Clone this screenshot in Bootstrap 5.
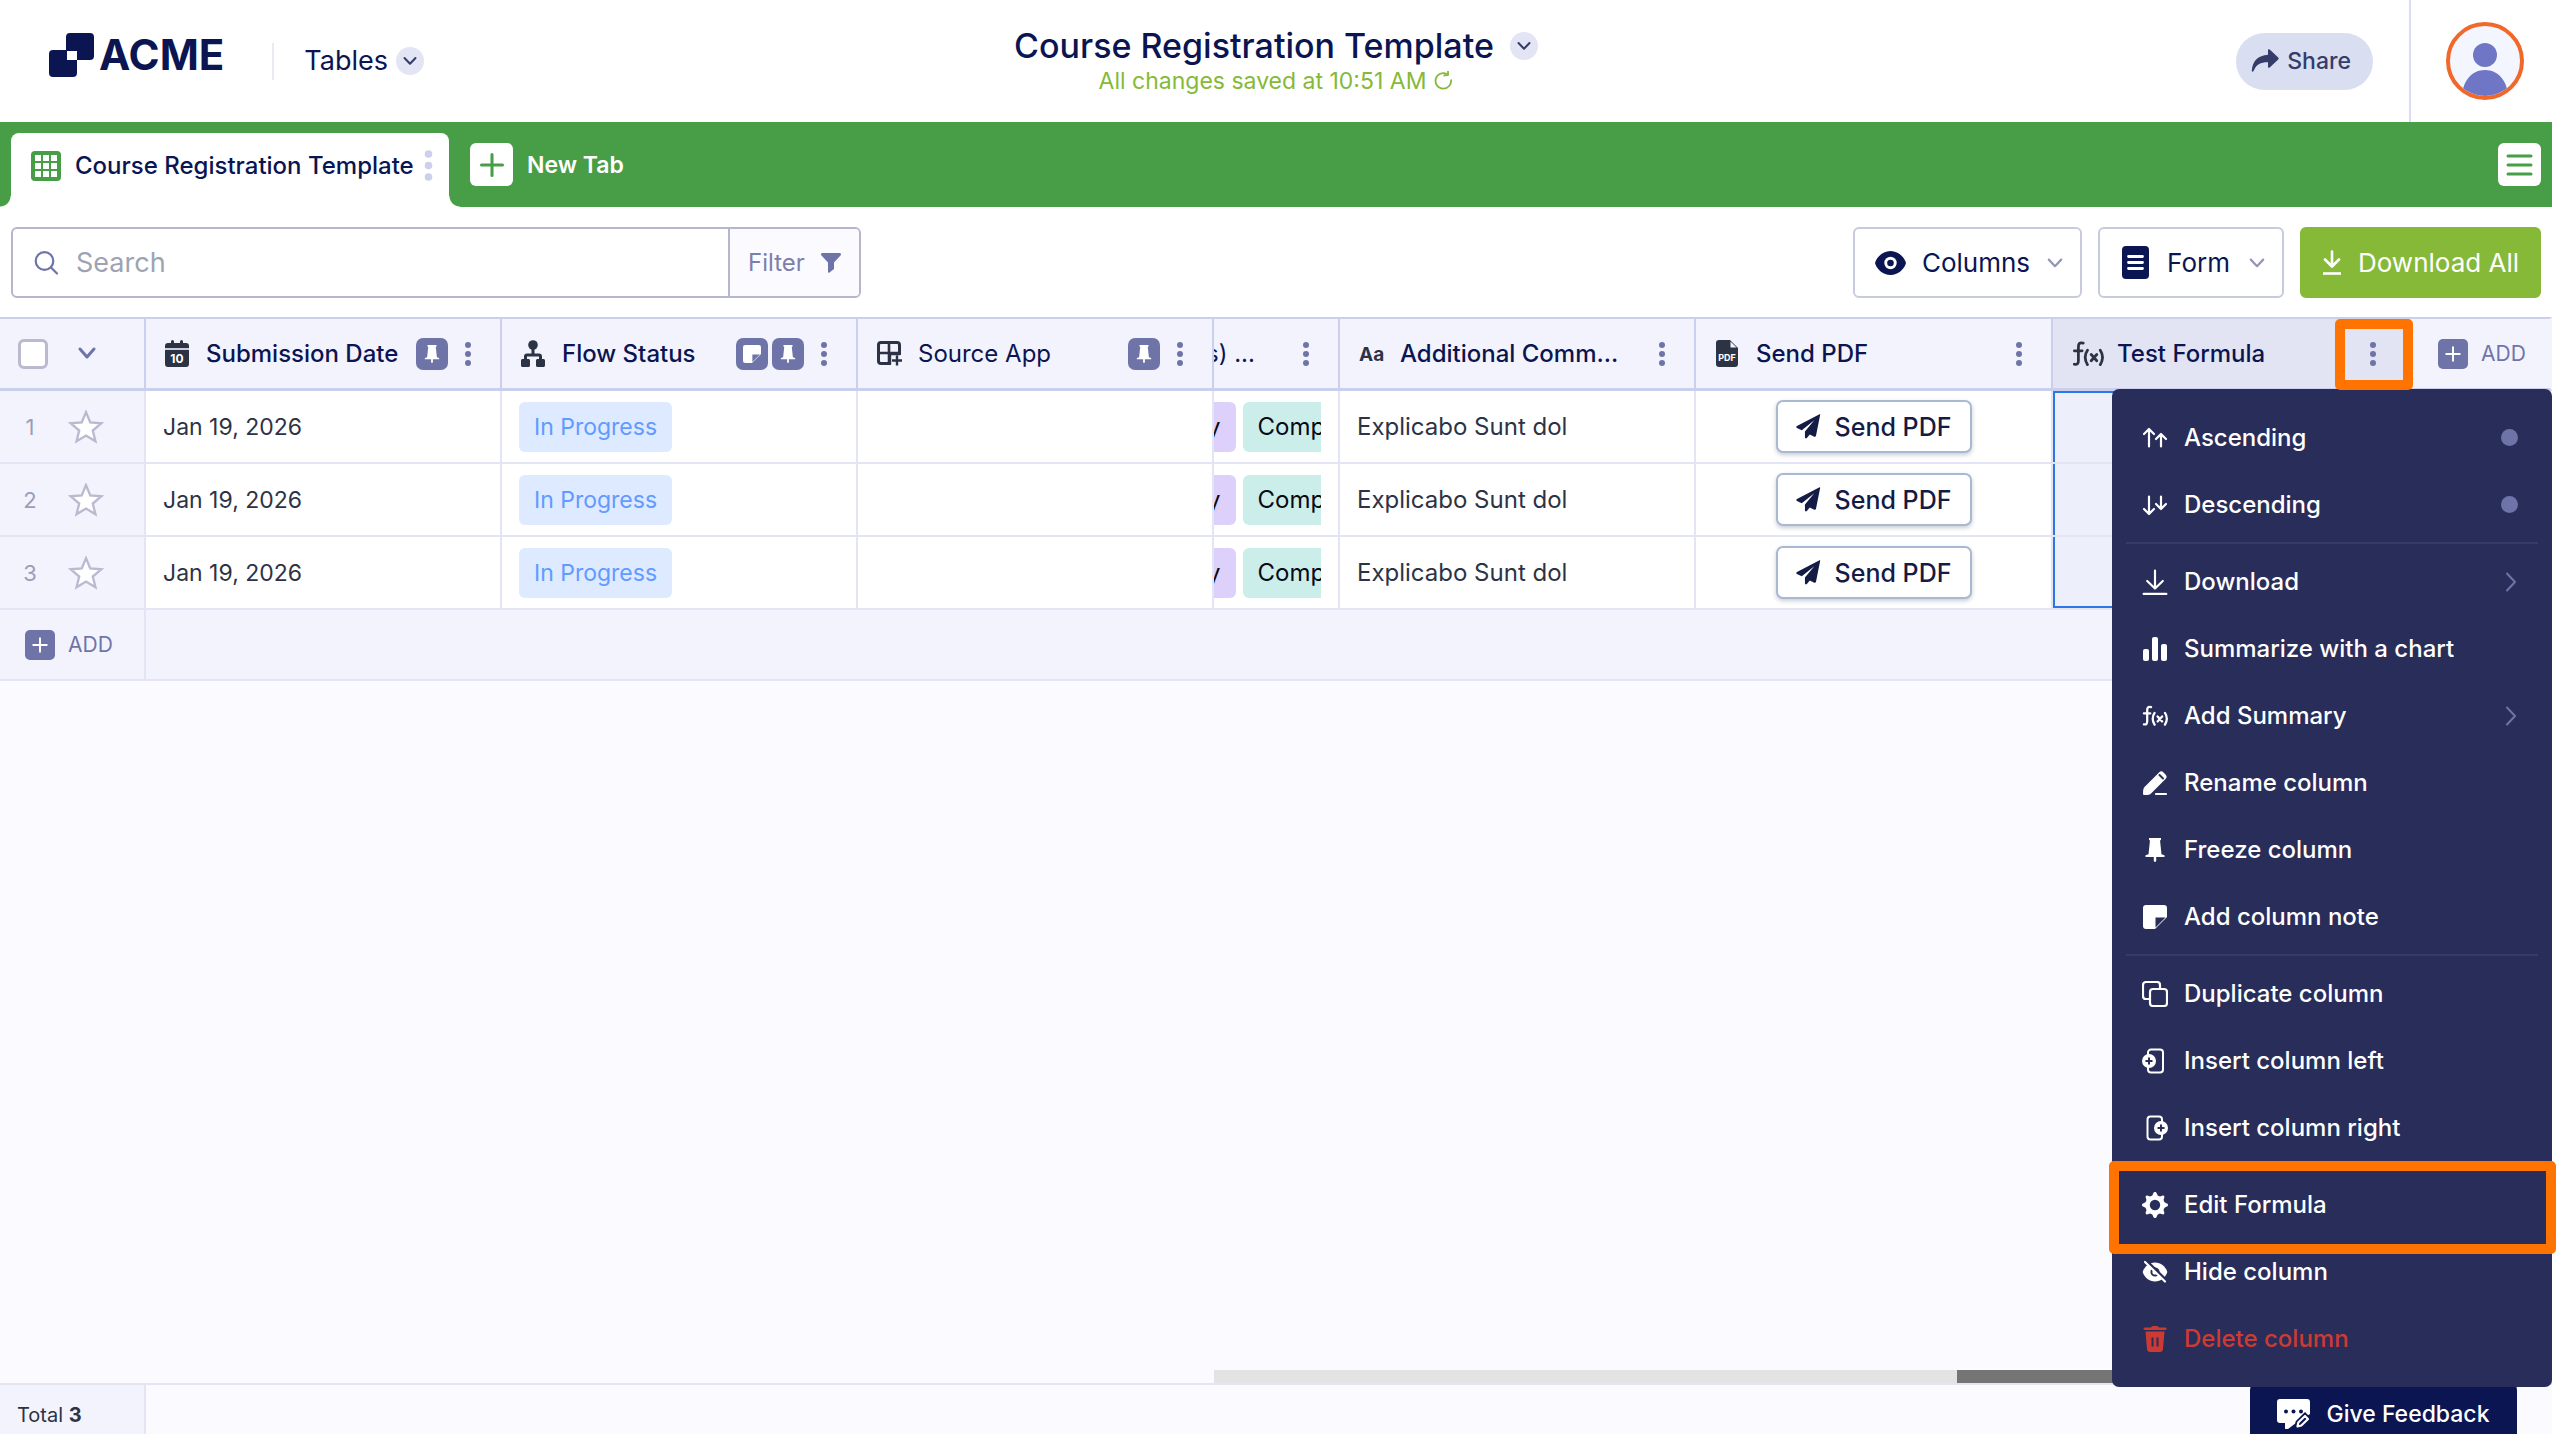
<!DOCTYPE html>
<html lang="en">
<head>
<meta charset="utf-8">
<meta name="viewport" content="width=device-width, initial-scale=1">
<title>Course Registration Template</title>
<link href="https://cdn.jsdelivr.net/npm/bootstrap@5.3.0/dist/css/bootstrap.min.css" rel="stylesheet">
<style>
:root{--navy:#0a1551;--ink:#2c3345;--violet:#6f74a8;--line:#e3e4f4;--headline:#cbcfee;--pale:#f3f3fe;--grass:#489e46;--lime:#86b937;--mark:#ff7300;--menu:#292d59}
body{font-family:Inter,"Noto Sans",sans-serif;font-size:23px;line-height:28px;color:var(--navy);background:#fff}
svg{display:block;flex:none}
button{font:inherit;color:inherit}
.bare{background:none;border:0;padding:0}
.shell{background:#fff;margin-right:8px}
/* header */
.topbar{display:grid;grid-template-columns:1fr auto 1fr;height:122px}
.lockup{margin-left:49px;padding-bottom:12px;gap:5px}
.brandname{font-weight:700;font-size:42px;line-height:44px}
.brandrule{width:2px;height:37px;background:#e9e9f8}
.product{font-size:27px;line-height:32px;padding-left:6px}
.roundchev{width:28px;height:28px;border-radius:50%;background:#e3e5f5;color:#343c6a}
.doctitle{font-size:34px;line-height:36px;font-weight:500}
.saved{color:var(--lime);font-size:23px;line-height:28px;margin-top:3px}
.sharebtn{height:57px;border-radius:29px;background:#dadef1;color:#343c6a;font-weight:500;padding:0 22px 0 15px;margin-right:28px}
.profile{width:143px;border-left:2px solid #dadcf2;padding-left:6px}
.avatar{width:78px;height:78px;border-radius:50%;border:4px solid #f0692b;background:#f3f6ff;overflow:hidden;color:#6f76c5}
/* tabs */
.tabstrip{height:85px;background:var(--grass);padding-left:11px;padding-right:11px;font-size:24px}
.sheet{position:relative;height:74px;width:438px;background:#fff;border-radius:8px 8px 0 0;padding:0 16px 9px 20px;font-weight:500}
.sheetname{margin-left:14px}
.sheet::before,.sheet::after{content:"";position:absolute;bottom:0;width:11px;height:11px}
.sheet::before{right:100%;background:radial-gradient(circle at 0 0,transparent 10px,#fff 11px)}
.sheet::after{left:100%;background:radial-gradient(circle at 100% 0,transparent 10px,#fff 11px)}
.tabactions{padding-left:21px}
.newtab{gap:14px;font-size:23px;font-weight:600}
.squarebtn{width:43px;height:43px;border-radius:6px;background:#fff;color:var(--grass)}
/* toolbar */
.tools{padding:20px 11px;height:110px}
.finder{width:850px;height:71px;border:2px solid #b5b5ce;border-radius:6px;overflow:hidden}
.finder label{padding-left:21px}
.finder input{border:0;outline:0;font-size:27px;color:var(--navy);background:none;min-width:0}
.finder input::placeholder{color:#9da3b2;opacity:1}
.filterbtn{width:131px;border-left:2px solid #b5b5ce;background:#fafaff;color:#7c7fab;font-size:24px}
.toolbtn{height:71px;border:2px solid #c8cbdd;border-radius:6px;background:#fff;font-size:26px;padding:0 16px 0 20px;gap:16px}
.toolbtn.wide{padding-left:22px;gap:18px}
.toolbtn.green{background:var(--lime);border-color:var(--lime);color:#fff;padding:0 20px}
/* grid */
.gridarea{position:relative;background:#fbfaff}
.records{table-layout:fixed;border-collapse:separate;border-spacing:0;width:100%}
.records th,.records td{padding:0;vertical-align:middle;overflow:hidden;white-space:nowrap}
.records th{height:74px;background:var(--pale);border-top:2px solid var(--headline);border-bottom:3px solid var(--headline);border-right:2px solid var(--headline);font-size:24px;font-weight:500}
.records th.hot{background:#e2e4f3;overflow:visible}
.records td{height:73px;background:#fff;border-right:2px solid var(--line);border-bottom:2px solid var(--line);color:var(--ink)}
.records td.lead-cell,.records .addrow td{background:var(--pale)}
.records .addrow td{height:71px}
.records th:last-child,.records td:last-child{border-right-color:transparent}
.records td.picked{background:#edf0fa;box-shadow:inset 2px 0 #2e75e6}
.records tr.first td.picked{box-shadow:inset 2px 2px #2e75e6}
.records tr.final td.picked{box-shadow:inset 2px -2px #2e75e6}
.cellhead{padding-left:19px;padding-right:28px}
.celltext{padding-left:17px}
.celltext.prose{font-size:24px}
.kindicon{width:24px;margin-right:17px;color:var(--ink)}
.chip{width:32px;height:32px;border-radius:7px;background:var(--violet);color:#fff}
.dots{color:var(--violet)}
.pickall{appearance:none;width:30px;height:30px;border:3px solid #bab9d0;border-radius:6px;background:#fff;margin:0 0 0 18px}
.rownum{width:60px;text-align:center;color:#9b9db9;font-size:22px}
.tagbox{display:inline-block;height:50px;line-height:50px;border-radius:6px;padding:0 15px}
.tagbox.blue{background:#deeaff;color:#629aff}
.tagbox.lilac{background:#ddd1fc;color:#0a0a14;margin-left:-22px}
.tagbox.mint{background:#cceeea;color:#0a0a14}
.clipped{overflow:hidden;margin-right:17px;gap:7px;font-size:24px}
.peek{margin-left:-8px;font-weight:400}
.sendbtn{height:53px;width:196px;border:2px solid #aab8d2;border-radius:7px;background:#fff;color:#141c45;font-size:25px;font-weight:500;box-shadow:0 2px 4px rgba(40,50,90,.25);gap:14px}
.adder{color:var(--violet);font-size:21px;font-weight:400;gap:13px;margin-left:25px}
.records th .adder{margin-left:31px}
.addmark{width:30px;height:30px;border-radius:5px;background:var(--violet);color:#fff}
.ring{position:absolute;border:10px solid var(--mark);border-radius:5px;pointer-events:none;z-index:30}
.dotring{inset:-22px -36px -23px -34px}
.itemring{inset:-10px -4px -16px -3px}
.track{height:13px;background:#e3e3e3;margin-left:1214px}
.thumb{height:13px;width:320px;background:#757575;margin-left:743px}
.totals{height:51px;border-top:2px solid var(--line);background:#fbfaff;font-size:20px;color:var(--ink)}
.totalcell{width:146px;background:var(--pale);border-right:2px solid var(--line);padding:10px 0 0 17px}
/* column menu */
.colmenu{position:absolute;top:72px;right:0;width:440px;z-index:20;background:var(--menu);color:#fff;border-radius:7px;padding:15px 0;margin:0;list-style:none;font-size:24px;font-weight:500}
.colmenu li{position:relative}
.colmenu .entry{height:67px;width:100%;padding:0 34px 0 30px;gap:16px;text-align:left}
.colmenu hr{height:2px;margin:4px 14px;border:0;background:#363a65;opacity:1}
.more{color:var(--violet)}
.bullet{width:17px;height:17px;border-radius:50%;background:var(--violet)}
.danger{color:#cc3b33}
.feedback{position:fixed;right:43px;bottom:0;width:267px;height:52px;z-index:10;background:#0a1551;color:#fff;border-radius:8px 8px 0 0;font-weight:500;padding:11px 0 0;gap:15px}
</style>
<script src="https://cdn.jsdelivr.net/npm/bootstrap@5.3.0/dist/js/bootstrap.bundle.min.js" defer></script>
</head>
<body>
<svg width="0" height="0" class="position-absolute" aria-hidden="true">
<defs>
<symbol id="chev" viewBox="0 0 16 16"><path d="M2.500 5 8 10.800 13.500 5" fill="none" stroke="currentColor" stroke-width="2" stroke-linecap="round" stroke-linejoin="round"/></symbol>
<symbol id="next" viewBox="0 0 12 22"><path d="M2 2.500 10 11l-8 8.500" fill="none" stroke="currentColor" stroke-width="2" stroke-linecap="round" stroke-linejoin="round"/></symbol>
<symbol id="dots" viewBox="0 0 8 26"><circle cx="4" cy="4" r="3"/><circle cx="4" cy="13" r="3"/><circle cx="4" cy="22" r="3"/></symbol>
<symbol id="pin" viewBox="0 0 24 24"><path d="M6 0h12v2.200h-1l1.500 14 3 1v1.800h-8.300v4.200L12 24l-1.200-.8V19H2.500v-1.800l3-1L7 2.200H6z"/></symbol>
<symbol id="note" viewBox="0 0 24 24"><path d="M3 0h18a3 3 0 0 1 3 3v9L12 24H3a3 3 0 0 1-3-3V3a3 3 0 0 1 3-3z"/><path d="M12.500 12.500h10L12.500 22.500z" fill="#292d59"/></symbol>
<symbol id="note2" viewBox="0 0 24 24"><path d="M3 0h18a3 3 0 0 1 3 3v9L12 24H3a3 3 0 0 1-3-3V3a3 3 0 0 1 3-3z"/><path d="M12.500 12.500h10L12.500 22.500z" fill="#6f74a8"/></symbol>
<symbol id="plus" viewBox="0 0 24 24"><path d="M12 3v18M3 12h18" stroke="currentColor" stroke-width="2.600" stroke-linecap="round"/></symbol>
<symbol id="star" viewBox="0 0 32 32"><path d="M16 2l4 9.700 10.300.8-7.900 6.800 2.500 10.200L16 24l-8.900 5.500 2.500-10.200L1.700 12.500 12 11.700z" fill="#fff" stroke="#bab9d0" stroke-width="2.200" stroke-linejoin="miter"/></symbol>
<symbol id="plane" viewBox="0 0 26 26"><path d="M25 1.500c.5-.9-.2-1.400-1-1L1 12.500c-1 .6-.9 1.500 0 2l5 2.300L19 6.500 9.300 18.300v6c0 1.200 1.300 1.600 2 .7l3-3.700 4.700 2.300c.8.300 1.600-.1 1.800-1z"/></symbol>
<symbol id="down" viewBox="0 0 24 24"><path d="M12 1.500v16M4.800 11 12 18l7.200-7M1.500 23h21" fill="none" stroke="currentColor" stroke-width="2" stroke-linecap="round" stroke-linejoin="round"/></symbol>
<symbol id="fx" viewBox="0 0 30 24"><g fill="none" stroke="currentColor" stroke-width="2.600" stroke-linecap="round"><path d="M10.500 1.800c-3.300-1-4.500.4-4.500 3.700v12.500c0 3-1 4.200-3.800 3.600M2.200 9h7.300"/><path d="M14.500 8.500c-2.700 4-2.700 9 0 13.500M26.500 8.500c2.700 4 2.700 9 0 13.500M18 12.500l5.200 5.800M23.200 12.500 18 18.300"/></g></symbol>
</defs>
</svg>

<div class="shell d-flex flex-column min-vh-100">
<header class="topbar">
  <div class="d-flex align-items-center">
    <a href="#" class="lockup d-flex align-items-center text-decoration-none text-reset" aria-label="ACME">
      <svg width="45" height="44" viewBox="0 0 45 44"><path fill="#0a1551" fill-rule="evenodd" d="M21 0h20a4 4 0 0 1 4 4v19a4 4 0 0 1-4 4H28v13a4 4 0 0 1-4 4H4a4 4 0 0 1-4-4V21a4 4 0 0 1 4-4h13V4a4 4 0 0 1 4-4zM18 18h10v9H18z"/></svg>
      <span class="brandname">ACME</span>
    </a>
    <div class="brandrule ms-5"></div>
    <button class="bare product d-flex align-items-center gap-2 ms-4">Tables<span class="roundchev d-flex align-items-center justify-content-center"><svg width="16" height="16"><use href="#chev"/></svg></span></button>
  </div>
  <div class="d-flex flex-column align-items-center pt-4">
    <button class="bare d-flex align-items-center gap-3 mt-1"><span class="doctitle">Course Registration Template</span><span class="roundchev d-flex align-items-center justify-content-center"><svg width="16" height="16"><use href="#chev"/></svg></span></button>
    <div class="saved d-flex align-items-center gap-2">All changes saved at 10:51 AM
      <svg width="19" height="20" viewBox="0 0 19 20" fill="none" stroke="currentColor" stroke-width="1.800"><path d="M13 3A7.800 7.800 0 1 0 17 8.500"/><path d="M9.500 4.500 14 4V0"/></svg></div>
  </div>
  <div class="d-flex align-items-center justify-content-end">
    <button class="bare sharebtn d-flex align-items-center gap-2"><svg width="28" height="24" viewBox="0 0 28 24" fill="currentColor"><path d="M17 1.200c0-1 1-1.300 1.700-.6l8.500 8c.6.600.6 1.300 0 1.900l-8.500 8c-.8.700-1.700.3-1.700-.7v-4.500C9 13.300 5.500 15.500 2.500 22c-.6 1.200-1.800.9-1.700-.5C1.500 12 7 6.300 17 5.700z"/></svg>Share</button>
    <div class="profile h-100 d-flex align-items-center justify-content-center ms-2">
      <button class="avatar p-0" aria-label="Profile"><svg width="70" height="70" viewBox="0 0 70 70" fill="currentColor"><circle cx="35" cy="29" r="12"/><path d="M12 72c0-16 9-28 23-28s23 12 23 28z"/></svg></button>
    </div>
  </div>
</header>

<nav class="tabstrip d-flex align-items-end">
  <div class="sheet d-flex align-items-center">
    <svg width="30" height="30" viewBox="0 0 30 30"><rect width="30" height="30" rx="4" fill="#489e46"/><g fill="#fff"><path d="M4 4h6v6H4zM12 4h6v6h-6zM20 4h6v6h-6zM4 12h6v6H4zM12 12h6v6h-6zM20 12h6v6h-6zM4 20h6v6H4zM12 20h6v6h-6zM20 20h6v6h-6z"/></g></svg>
    <span class="sheetname me-auto text-nowrap">Course Registration Template</span>
    <button class="bare" aria-label="Tab options"><svg width="9" height="31" viewBox="0 0 9 31" fill="#cdd0ea"><circle cx="4.500" cy="4" r="3.800"/><circle cx="4.500" cy="15.500" r="3.800"/><circle cx="4.500" cy="27" r="3.800"/></svg></button>
  </div>
  <div class="tabactions d-flex align-items-center flex-fill align-self-center">
    <button class="bare newtab d-flex align-items-center text-white"><span class="squarebtn d-flex align-items-center justify-content-center"><svg width="28" height="28"><use href="#plus"/></svg></span>New Tab</button>
    <button class="bare squarebtn d-flex align-items-center justify-content-center ms-auto" aria-label="All tabs"><svg width="27" height="22" viewBox="0 0 27 22" stroke="currentColor" stroke-width="3" stroke-linecap="round"><path d="M2 2h23M2 11h23M2 20h23"/></svg></button>
  </div>
</nav>

<div class="tools d-flex align-items-start justify-content-between">
  <div class="finder d-flex">
    <label class="d-flex align-items-center flex-fill gap-3">
      <svg width="24" height="25" viewBox="0 0 24 25" fill="none" stroke="#6f74a8" stroke-width="2.200" stroke-linecap="round"><circle cx="10.500" cy="11" r="8.800"/><path d="m17 17.500 6 6"/></svg>
      <input class="flex-fill" type="search" placeholder="Search" aria-label="Search">
    </label>
    <button class="bare filterbtn d-flex align-items-center justify-content-center gap-3">Filter<svg width="20" height="20" viewBox="0 0 20 20" fill="#6f74a8"><path d="M1.500 0h17c1.300 0 1.900 1.200 1.200 2.200L13 9.500V16l-4.500 3.500c-.8.500-1.500.2-1.500-.7V9.500L.3 2.200C-.4 1.200.2 0 1.500 0z"/></svg></button>
  </div>
  <div class="d-flex">
    <button class="toolbtn d-flex align-items-center me-3"><svg width="31" height="24" viewBox="0 0 31 24"><path d="M15.500 0C23 0 28.500 5.500 30.500 10.500c.5 1 .5 2 0 3C28.500 18.500 23 24 15.500 24S2.500 18.500.5 13.500c-.5-1-.5-2 0-3C2.500 5.500 8 0 15.500 0z" fill="#0a1551"/><circle cx="15.500" cy="12" r="6.200" fill="#fff"/><circle cx="15.500" cy="12" r="3.300" fill="#0a1551"/></svg><span>Columns</span><svg width="18" height="18" color="#9597b8"><use href="#chev"/></svg></button>
    <button class="toolbtn wide d-flex align-items-center me-3"><svg width="27" height="33" viewBox="0 0 27 33"><rect width="27" height="33" rx="4" fill="#0a1551"/><path d="M6.500 10.500h14M6.500 16.500h14M6.500 22.500h14" stroke="#fff" stroke-width="2.800" stroke-linecap="round"/></svg><span>Form</span><svg width="18" height="18" color="#9597b8"><use href="#chev"/></svg></button>
    <button class="toolbtn green d-flex align-items-center"><svg width="20" height="25" viewBox="0 0 20 25" fill="none" stroke="#fff" stroke-width="2.600" stroke-linecap="round" stroke-linejoin="round"><path d="M10 1.500V16M3 9.500l7 7 7-7"/><path d="M1 23.500h18" stroke-linecap="butt"/></svg>Download All</button>
  </div>
</div>

<main class="gridarea flex-fill d-flex flex-column">
<table class="records">
<colgroup><col style="width:146px"><col style="width:356px"><col style="width:356px"><col style="width:356px"><col style="width:126px"><col style="width:356px"><col style="width:357px"><col style="width:354px"><col></colgroup>
<thead><tr>
  <th><div class="d-flex align-items-center"><input type="checkbox" class="pickall" aria-label="Select all"><button class="bare ms-4 ps-1" aria-label="Selection options"><svg width="22" height="22" viewBox="0 0 22 22" fill="none" stroke="#6f74a8" stroke-width="3" stroke-linecap="round" stroke-linejoin="round"><path d="m4 6 7 8 7-8"/></svg></button></div></th>
  <th><div class="cellhead d-flex align-items-center"><span class="kindicon"><svg width="24" height="27" viewBox="0 0 24 27"><path fill="#2c3345" d="M3 3h3V1.500a1.500 1.500 0 0 1 3 0V3h6V1.500a1.500 1.500 0 0 1 3 0V3h3a3 3 0 0 1 3 3v18a3 3 0 0 1-3 3H3a3 3 0 0 1-3-3V6a3 3 0 0 1 3-3z"/><path d="M0 9h24" stroke="#f3f3fe" stroke-width="1.600"/><text x="12" y="23" text-anchor="middle" font-size="12" font-weight="700" fill="#fff">10</text></svg></span><span>Submission Date</span>
    <span class="chip ms-auto me-3 d-flex align-items-center justify-content-center"><svg width="18" height="18" fill="currentColor"><use href="#pin"/></svg></span><button class="bare dots" aria-label="Submission Date options"><svg width="8" height="26" fill="currentColor"><use href="#dots"/></svg></button></div></th>
  <th><div class="cellhead d-flex align-items-center"><span class="kindicon"><svg width="24" height="27" viewBox="0 0 24 27" fill="#2c3345"><circle cx="12" cy="5" r="4.800"/><path d="M10.500 8h3v5.500H18a3 3 0 0 1 3 3V19h1.500c.8 0 1.500.7 1.500 1.500v5c0 .8-.7 1.500-1.500 1.500h-6c-.8 0-1.500-.7-1.500-1.500v-5c0-.8.7-1.500 1.500-1.500H18v-2.500H6V19h1.500c.8 0 1.500.7 1.500 1.500v5c0 .8-.7 1.500-1.500 1.500h-6C.7 27 0 26.300 0 25.500v-5C0 19.700.7 19 1.500 19H3v-2.500a3 3 0 0 1 3-3h4.500z"/></svg></span><span>Flow Status</span>
    <span class="chip ms-auto me-1 d-flex align-items-center justify-content-center"><svg width="18" height="18" fill="currentColor"><use href="#note2"/></svg></span><span class="chip me-3 d-flex align-items-center justify-content-center"><svg width="18" height="18" fill="currentColor"><use href="#pin"/></svg></span><button class="bare dots" aria-label="Flow Status options"><svg width="8" height="26" fill="currentColor"><use href="#dots"/></svg></button></div></th>
  <th class="fw-normal"><div class="cellhead d-flex align-items-center"><span class="kindicon"><svg width="25" height="25" viewBox="0 0 25 25"><rect x="1.500" y="1.500" width="21" height="21" rx="2.500" fill="#f3f3fe" stroke="#2c3345" stroke-width="3"/><path d="M12 1v22M1 12h22" stroke="#2c3345" stroke-width="2.600"/><path d="M14 14h11v11H14z" fill="#f3f3fe"/><path d="M20 14.500v10M15 19.500h10M12 13h11M13 12v11" stroke="#2c3345" stroke-width="2.400"/></svg></span><span>Source App</span>
    <span class="chip ms-auto me-3 d-flex align-items-center justify-content-center"><svg width="18" height="18" fill="currentColor"><use href="#pin"/></svg></span><button class="bare dots" aria-label="Source App options"><svg width="8" height="26" fill="currentColor"><use href="#dots"/></svg></button></div></th>
  <th><div class="d-flex align-items-center pe-4"><span class="peek">s) ...</span><button class="bare dots ms-auto me-1" aria-label="Column options"><svg width="8" height="26" fill="currentColor"><use href="#dots"/></svg></button></div></th>
  <th><div class="cellhead d-flex align-items-center"><span class="kindicon"><svg width="26" height="24" viewBox="0 0 26 24"><text x="0" y="19" font-size="19" font-weight="700" fill="#2c3345">Aa</text></svg></span><span>Additional Comm...</span><button class="bare dots ms-auto" aria-label="Additional Comments options"><svg width="8" height="26" fill="currentColor"><use href="#dots"/></svg></button></div></th>
  <th><div class="cellhead d-flex align-items-center"><span class="kindicon"><svg class="mx-auto" width="22" height="27" viewBox="0 0 22 27"><path fill="#2c3345" d="M3 0h11l8 8v16a3 3 0 0 1-3 3H3a3 3 0 0 1-3-3V3a3 3 0 0 1 3-3z"/><path d="M14.500 1.500v6h6z" fill="#f3f3fe"/><text x="11" y="21" text-anchor="middle" font-size="9" font-weight="700" fill="#fff">PDF</text></svg></span><span>Send PDF</span><button class="bare dots ms-auto" aria-label="Send PDF options"><svg width="8" height="26" fill="currentColor"><use href="#dots"/></svg></button></div></th>
  <th class="hot"><div class="cellhead d-flex align-items-center"><span class="kindicon"><svg width="32" height="26"><use href="#fx"/></svg></span><span class="ps-1">Test Formula</span><button class="bare dots ms-auto position-relative" aria-label="Test Formula options"><svg width="8" height="26" fill="currentColor"><use href="#dots"/></svg><span class="ring dotring"></span></button></div></th>
  <th><button class="bare adder d-flex align-items-center"><span class="addmark d-flex align-items-center justify-content-center"><svg width="18" height="18"><use href="#plus"/></svg></span>ADD</button></th>
</tr></thead>
<tbody>
<tr class="first"><td class="lead-cell"><div class="d-flex align-items-center"><span class="rownum">1</span><button class="bare ms-2" aria-label="Star row 1"><svg width="36" height="34"><use href="#star"/></svg></button></div></td><td><div class="celltext">Jan 19, 2026</div></td><td><div class="celltext"><span class="tagbox blue">In Progress</span></div></td><td></td><td><div class="clipped d-flex"><span class="tagbox lilac">y</span><span class="tagbox mint">Comp</span></div></td><td><div class="celltext prose">Explicabo Sunt dol</div></td><td><button class="sendbtn d-flex align-items-center justify-content-center mx-auto p-0"><svg width="25" height="25" fill="currentColor"><use href="#plane"/></svg>Send PDF</button></td><td class="picked"></td><td></td></tr>
<tr><td class="lead-cell"><div class="d-flex align-items-center"><span class="rownum">2</span><button class="bare ms-2" aria-label="Star row 2"><svg width="36" height="34"><use href="#star"/></svg></button></div></td><td><div class="celltext">Jan 19, 2026</div></td><td><div class="celltext"><span class="tagbox blue">In Progress</span></div></td><td></td><td><div class="clipped d-flex"><span class="tagbox lilac">y</span><span class="tagbox mint">Comp</span></div></td><td><div class="celltext prose">Explicabo Sunt dol</div></td><td><button class="sendbtn d-flex align-items-center justify-content-center mx-auto p-0"><svg width="25" height="25" fill="currentColor"><use href="#plane"/></svg>Send PDF</button></td><td class="picked"></td><td></td></tr>
<tr class="final"><td class="lead-cell"><div class="d-flex align-items-center"><span class="rownum">3</span><button class="bare ms-2" aria-label="Star row 3"><svg width="36" height="34"><use href="#star"/></svg></button></div></td><td><div class="celltext">Jan 19, 2026</div></td><td><div class="celltext"><span class="tagbox blue">In Progress</span></div></td><td></td><td><div class="clipped d-flex"><span class="tagbox lilac">y</span><span class="tagbox mint">Comp</span></div></td><td><div class="celltext prose">Explicabo Sunt dol</div></td><td><button class="sendbtn d-flex align-items-center justify-content-center mx-auto p-0"><svg width="25" height="25" fill="currentColor"><use href="#plane"/></svg>Send PDF</button></td><td class="picked"></td><td></td></tr>
<tr class="addrow"><td><button class="bare adder d-flex align-items-center"><span class="addmark d-flex align-items-center justify-content-center"><svg width="18" height="18"><use href="#plus"/></svg></span>ADD</button></td><td colspan="8"></td></tr>
</tbody>
</table>
<div class="track mt-auto"><div class="thumb"></div></div>

<ul class="colmenu">
  <li><button class="bare entry d-flex align-items-center"><svg width="26" height="26" viewBox="0 0 26 26" fill="none" stroke="#fff" stroke-width="2.200" stroke-linecap="round" stroke-linejoin="round"><path d="M7 21.500V4.500M2 9l5-5 5 5M19 21.500V9.500M14 14l5-5 5 5"/></svg>Ascending<span class="bullet ms-auto"></span></button></li>
  <li><button class="bare entry d-flex align-items-center"><svg width="26" height="26" viewBox="0 0 26 26" fill="none" stroke="#fff" stroke-width="2.200" stroke-linecap="round" stroke-linejoin="round"><path d="M7 4.500v17M2 17l5 5 5-5M19 4.500v12M14 12l5 5 5-5"/></svg>Descending<span class="bullet ms-auto"></span></button></li>
  <li><hr></li>
  <li><button class="bare entry d-flex align-items-center"><svg width="26" height="26"><use href="#down"/></svg>Download<svg class="more ms-auto" width="14" height="22"><use href="#next"/></svg></button></li>
  <li><button class="bare entry d-flex align-items-center"><svg width="26" height="26" viewBox="0 0 26 26" fill="#fff"><rect x="1" y="13" width="6" height="12" rx="2"/><rect x="10" y="1" width="6" height="24" rx="2"/><rect x="19" y="8" width="6" height="17" rx="2"/></svg>Summarize with a chart</button></li>
  <li><button class="bare entry d-flex align-items-center"><svg width="26" height="26"><use href="#fx"/></svg>Add Summary<svg class="more ms-auto" width="14" height="22"><use href="#next"/></svg></button></li>
  <li><button class="bare entry d-flex align-items-center"><svg width="26" height="26" viewBox="0 0 26 26" fill="#fff"><path d="M17 2.500c1.600-1.600 3-1.600 4.500 0l2 2c1.500 1.500 1.500 3 0 4.500L9 23.500c-1 1-2.500 1.500-6.500 1.500-1 0-1.500-.5-1.500-1.500C1 19.500 1.500 18 2.500 17z"/><path d="m17.500 5 3.500 3.500" stroke="#292d59" stroke-width="2" stroke-linecap="round"/><path d="M14 24h10" stroke="#fff" stroke-width="2.200" stroke-linecap="round"/></svg>Rename column</button></li>
  <li><button class="bare entry d-flex align-items-center"><svg width="26" height="24" fill="#fff"><use href="#pin"/></svg>Freeze column</button></li>
  <li><button class="bare entry d-flex align-items-center"><svg width="26" height="24" fill="#fff"><use href="#note"/></svg>Add column note</button></li>
  <li><hr></li>
  <li><button class="bare entry d-flex align-items-center"><svg width="26" height="26" viewBox="0 0 26 26" fill="none" stroke="#fff" stroke-width="2.200"><path d="M7.500 18H4a3 3 0 0 1-3-3V4a3 3 0 0 1 3-3h11a3 3 0 0 1 3 3v3.500"/><rect x="8" y="8" width="17" height="17" rx="3"/></svg>Duplicate column</button></li>
  <li><button class="bare entry d-flex align-items-center"><svg width="26" height="26" viewBox="0 0 26 26" fill="none" stroke="#fff" stroke-width="2"><path d="M6 7V4.500a3 3 0 0 1 3-3h9a3 3 0 0 1 3 3v17a3 3 0 0 1-3 3H9a3 3 0 0 1-3-3V19"/><circle cx="7" cy="13" r="7" fill="#fff" stroke="none"/><path d="M7 9.500v7M3.500 13h7" stroke="#292d59"/></svg>Insert column left</button></li>
  <li><button class="bare entry d-flex align-items-center"><svg width="26" height="26" viewBox="0 0 26 26" fill="none" stroke="#fff" stroke-width="2"><path d="M20 7V4.500a3 3 0 0 0-3-3H8.500a3 3 0 0 0-3 3v17a3 3 0 0 0 3 3H17a3 3 0 0 0 3-3V19"/><circle cx="19" cy="13" r="7" fill="#fff" stroke="none"/><path d="M19 9.500v7M15.500 13h7" stroke="#292d59"/></svg>Insert column right</button></li>
  <li><hr></li>
  <li><button class="bare entry d-flex align-items-center"><svg width="26" height="26" viewBox="0 0 26 26"><path fill="#fff" fill-rule="evenodd" d="M13 0c1 0 1.500.5 2 2l.7 1.500 2.300 1 2-.8c2-.5 2.700.3 2.200 2.200l-.7 2 1 2.300L24 11c1.500.5 2 1 2 2s-.5 1.500-2 2l-1.500.8-1 2.300.7 2c.5 1.900-.3 2.700-2.200 2.200l-2-.8-2.300 1L15 24c-.5 1.500-1 2-2 2s-1.500-.5-2-2l-.7-1.500-2.300-1-2 .8c-2 .5-2.700-.3-2.200-2.200l.7-2-1-2.300L2 15c-1.500-.5-2-1-2-2s.5-1.500 2-2l1.500-.8 1-2.300-.7-2C3.300 4 4.100 3.200 6 3.700l2 .8 2.300-1L11 2c.5-1.500 1-2 2-2zm0 7.800a5.200 5.200 0 1 0 0 10.400 5.200 5.200 0 0 0 0-10.400z"/></svg>Edit Formula</button><span class="ring itemring"></span></li>
  <li><button class="bare entry d-flex align-items-center"><svg width="26" height="26" viewBox="0 0 26 26"><path fill="#fff" d="M13 3.500c6 0 10 4 12 8.500.3.700.3 1.300 0 2-2 4.500-6 8.500-12 8.500S3 18.500 1 14c-.3-.7-.3-1.300 0-2 2-4.500 6-8.500 12-8.500z"/><circle cx="13" cy="13" r="3.600" fill="none" stroke="#292d59" stroke-width="2"/><path d="M3 0.500 26 23" stroke="#292d59" stroke-width="3"/><path d="M3 3l20 19.500" stroke="#fff" stroke-width="2.200" stroke-linecap="round"/></svg>Hide column</button></li>
  <li><button class="bare entry danger d-flex align-items-center"><svg width="26" height="28" viewBox="0 0 26 28" fill="currentColor"><path d="M9 2.500C9.500 1.300 10.500 1 13 1s3.500.3 4 1.500h6c1 0 1.500.5 1.500 1.300S24 5 23 5H3c-1 0-1.500-.5-1.500-1.200S2 2.500 3 2.500z"/><path fill-rule="evenodd" d="M3.500 6.500h19L21 24c-.2 2-1.300 3-3 3H8c-1.700 0-2.800-1-3-3zM9.500 12.500v9h2v-9zm5 0v9h2v-9z"/></svg>Delete column</button></li>
</ul>
</main>

<footer class="totals d-flex"><div class="totalcell d-flex align-items-center"><span>Total <b>3</b></span></div></footer>
</div>
<button class="bare feedback d-flex align-items-center justify-content-center"><svg width="34" height="30" viewBox="0 0 34 30"><path fill="#fff" d="M3 0h27a3 3 0 0 1 3 3v12L19 24l-8 6c-2 1-3 .500-3-1v-5H3a3 3 0 0 1-3-3V3a3 3 0 0 1 3-3z"/><g fill="#0a1551"><circle cx="9" cy="12.500" r="2"/><circle cx="16.500" cy="12.500" r="2"/><circle cx="24" cy="12.500" r="2"/></g><path d="m20 28 1-4.500 7-7 3.500 3.500-7 7z" fill="#fff" stroke="#0a1551" stroke-width="5"/><path d="m20.500 27.500.8-4 6.700-6.500 3 3-6.700 6.500z" fill="#0a1551" stroke="#fff" stroke-width="2.200" stroke-linejoin="round"/></svg>Give Feedback</button>
</body>
</html>
